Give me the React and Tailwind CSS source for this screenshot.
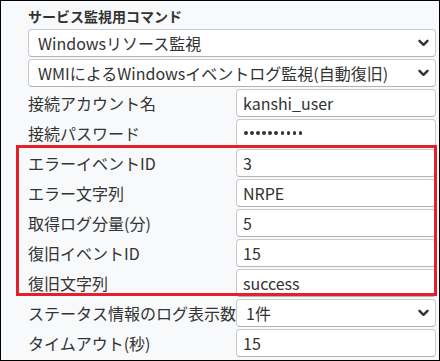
import React from "react";

const font = { fontFamily: "'Noto Sans CJK JP', 'Noto Sans', sans-serif" };

function Chevron() {
  return (
    <svg width="11" height="8" viewBox="0 0 11 8" className="shrink-0">
      <path d="M1.5 1.8 L5.5 5.8 L9.5 1.8" fill="none" stroke="#333" strokeWidth="2.4" strokeLinecap="round" strokeLinejoin="round" />
    </svg>
  );
}

function Select({ value, className = "" }) {
  return (
    <div className={`flex items-center justify-between h-[28px] bg-white border border-[#c9c9c9] border-b-[#b3b3b3] rounded-[4px] pl-[9px] pr-[6px] ${className}`}>
      <span className="text-[16px] leading-[26px] text-[#333] whitespace-nowrap">{value}</span>
      <Chevron />
    </div>
  );
}

function Input({ value, password }) {
  return (
    <div className="flex items-center h-[28px] w-[200px] bg-white border border-[#c9c9c9] border-b-[#b3b3b3] rounded-[4px] pl-[6px]">
      {password ? (
        <div className="flex gap-[2.6px] pl-[1px]">
          {Array.from({ length: 10 }).map((_, i) => (
            <div key={i} className="w-[3.5px] h-[3.5px] rounded-full bg-[#333]" />
          ))}
        </div>
      ) : (
        <span className="text-[16px] leading-[26px] text-[#333] whitespace-nowrap">{value}</span>
      )}
    </div>
  );
}

function Row({ label, children }) {
  return (
    <div className="flex items-center justify-between h-[28px]">
      <span className="text-[16px] text-[#333] whitespace-nowrap">{label}</span>
      {children}
    </div>
  );
}

export default function App() {
  return (
    <div className="w-[440px] h-[361px] border border-black bg-[#f8f9fa] overflow-hidden" style={font}>
      <div className="relative flex flex-col gap-[2px] pt-[4px] pl-[27px] pr-[3px]">
        <div className="text-[14px] leading-[22px] font-bold text-[#333]">サービス監視用コマンド</div>
        <Select value="Windowsリソース監視" />
        <Select value="WMIによるWindowsイベントログ監視(自動復旧)" />
        <Row label="接続アカウント名"><Input value="kanshi_user" /></Row>
        <Row label="接続パスワード"><Input password /></Row>
        <Row label="エラーイベントID"><Input value="3" /></Row>
        <Row label="エラー文字列"><Input value="NRPE" /></Row>
        <Row label="取得ログ分量(分)"><Input value="5" /></Row>
        <Row label="復旧イベントID"><Input value="15" /></Row>
        <Row label="復旧文字列"><Input value="success" /></Row>
        <Row label="ステータス情報のログ表示数"><Select value="1件" className="w-[200px] pl-[6px]" /></Row>
        <Row label="タイムアウト(秒)"><Input value="15" /></Row>
        <div className="absolute left-[15px] top-[144px] w-[421px] h-[151px] border-[3px] border-[#e3202c] pointer-events-none" />
      </div>
    </div>
  );
}
